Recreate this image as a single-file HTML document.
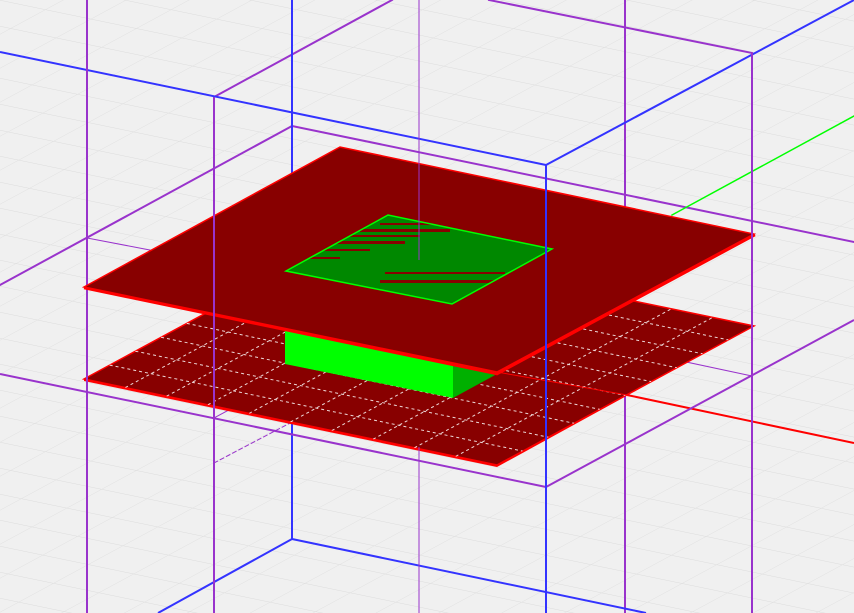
<!DOCTYPE html>
<html><head><meta charset="utf-8"><style>html,body{margin:0;padding:0;background:#f0f0f0;overflow:hidden}svg{display:block}</style></head>
<body>
<svg width="854" height="613" viewBox="0 0 854 613" xmlns="http://www.w3.org/2000/svg">
<defs>
<pattern id="g1" patternUnits="userSpaceOnUse" width="854" height="26" patternTransform="skewY(11.7)">
<line x1="0" y1="0" x2="854" y2="0" stroke="#dcdcdc" stroke-width="1"/>
</pattern>
<pattern id="g2" patternUnits="userSpaceOnUse" width="854" height="34" patternTransform="skewY(-28.4)">
<line x1="0" y1="0" x2="854" y2="0" stroke="#e0e0e0" stroke-width="1"/>
</pattern>
<clipPath id="sq"><polygon points="286,271 388,215 552,249 452,304"/></clipPath>
</defs>
<rect width="854" height="613" fill="#f0f0f0"/>
<rect width="854" height="613" fill="url(#g1)"/>
<rect width="854" height="613" fill="url(#g2)"/>

<g fill="none" stroke-linecap="square">
<!-- back lines -->
<line x1="489" y1="0" x2="752" y2="53" stroke="#9933cc" stroke-width="2"/>
<line x1="392" y1="0" x2="214" y2="97" stroke="#9933cc" stroke-width="2"/>
<line x1="292" y1="126" x2="854" y2="242" stroke="#9933cc" stroke-width="2"/>
<line x1="292" y1="126" x2="0" y2="285" stroke="#9933cc" stroke-width="2"/>
<line x1="87" y1="238" x2="150" y2="250" stroke="#9933cc" stroke-width="1"/>
<line x1="625" y1="0" x2="625" y2="613" stroke="#9933cc" stroke-width="2"/>
<line x1="292" y1="0" x2="292" y2="539" stroke="#3333ff" stroke-width="2"/>
<line x1="854" y1="116" x2="672" y2="215" stroke="#00ff00" stroke-width="1.5"/>
<line x1="214" y1="463" x2="292" y2="422" stroke="#9933cc" stroke-width="1" stroke-dasharray="4,3"/>
<line x1="214" y1="418" x2="350" y2="345" stroke="#9933cc" stroke-width="1"/>
<line x1="569" y1="337" x2="752" y2="376" stroke="#9933cc" stroke-width="1"/>
</g>

<!-- lower plate -->
<polygon points="84,379 341,240 754,326 497,465" fill="#880000" stroke="#ff0000" stroke-width="1.5"/>
<g stroke="#ffffff" stroke-width="1" stroke-dasharray="3,3" opacity="0.85">
<line x1="125.3" y1="387.6" x2="382.3" y2="248.6"/>
<line x1="166.6" y1="396.2" x2="423.6" y2="257.2"/>
<line x1="207.9" y1="404.8" x2="464.9" y2="265.8"/>
<line x1="249.2" y1="413.4" x2="506.2" y2="274.4"/>
<line x1="290.5" y1="422" x2="547.5" y2="283"/>
<line x1="331.8" y1="430.6" x2="588.8" y2="291.6"/>
<line x1="373.1" y1="439.2" x2="630.1" y2="300.2"/>
<line x1="414.4" y1="447.8" x2="671.4" y2="308.8"/>
<line x1="455.7" y1="456.4" x2="712.7" y2="317.4"/>
<line x1="109.7" y1="365.1" x2="522.7" y2="451.1"/>
<line x1="135.4" y1="351.2" x2="548.4" y2="437.2"/>
<line x1="161.1" y1="337.3" x2="574.1" y2="423.3"/>
<line x1="186.8" y1="323.4" x2="599.8" y2="409.4"/>
<line x1="212.5" y1="309.5" x2="625.5" y2="395.5"/>
<line x1="238.2" y1="295.6" x2="651.2" y2="381.6"/>
<line x1="263.9" y1="281.7" x2="676.9" y2="367.7"/>
<line x1="289.6" y1="267.8" x2="702.6" y2="353.8"/>
<line x1="315.3" y1="253.9" x2="728.3" y2="339.9"/>
</g>
<polygon points="84,379 497,465 754,326 497,467 84,381" fill="#ff0000"/>

<!-- green box -->
<polygon points="285,320 285,364 453,398 453,330" fill="#00ff00"/>
<polygon points="453,398 497,374 497,340 453,330" fill="#00b000"/>

<line x1="497" y1="372" x2="627" y2="395" stroke="#ff0000" stroke-width="1"/>
<line x1="627" y1="395" x2="854" y2="443" stroke="#ff0000" stroke-width="2"/>

<!-- front-ish lines -->
<g fill="none">
<line x1="0" y1="374" x2="546" y2="487" stroke="#9933cc" stroke-width="2"/>
<line x1="546" y1="487" x2="854" y2="320" stroke="#9933cc" stroke-width="2"/>
<line x1="292" y1="539" x2="646" y2="613" stroke="#3333ff" stroke-width="2"/>
<line x1="292" y1="539" x2="158" y2="613" stroke="#3333ff" stroke-width="2"/>
<line x1="419" y1="447" x2="419" y2="613" stroke="#9933cc" stroke-width="1"/>
<line x1="0" y1="52" x2="546" y2="165" stroke="#3333ff" stroke-width="2"/>
<line x1="546" y1="165" x2="854" y2="0" stroke="#3333ff" stroke-width="2"/>
<line x1="87" y1="0" x2="87" y2="613" stroke="#9933cc" stroke-width="2"/>
</g>

<!-- top plate -->
<polygon points="84,287 340,147 754,234 497,372" fill="#880000" stroke="#ff0000" stroke-width="1.5"/>
<polyline points="84,288 497,374 755,235" fill="none" stroke="#ff0000" stroke-width="2.5"/>

<!-- green square -->
<polygon points="286,271 388,215 552,249 452,304" fill="#008800"/>
<g clip-path="url(#sq)" fill="#880000">
<rect x="380" y="223" width="60" height="2"/>
<rect x="360" y="229" width="90" height="3"/>
<rect x="350" y="235" width="70" height="2"/>
<rect x="335" y="241" width="70" height="3"/>
<rect x="320" y="249" width="50" height="2"/>
<rect x="310" y="257" width="30" height="2"/>
<rect x="385" y="272" width="120" height="2"/>
<rect x="380" y="280" width="130" height="3"/>
</g>
<polygon points="286,271 388,215 552,249 452,304" fill="none" stroke="#00ff00" stroke-width="1.5"/>

<!-- lines in front of plate -->
<line x1="214" y1="97" x2="214" y2="613" stroke="#9933cc" stroke-width="2"/>
<line x1="546" y1="165" x2="546" y2="613" stroke="#3333ff" stroke-width="2"/>
<line x1="752" y1="53" x2="752" y2="613" stroke="#9933cc" stroke-width="2"/>
<line x1="419" y1="0" x2="419" y2="260" stroke="#9933cc" stroke-width="1"/>
</svg>
</body></html>
